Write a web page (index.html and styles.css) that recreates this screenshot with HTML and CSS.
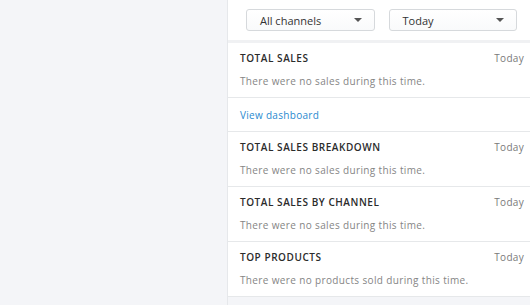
FILE: index.html
```html
<!DOCTYPE html>
<html lang="en">
<head>
    <meta charset="UTF-8">
    <meta name="viewport" content="width=device-width, initial-scale=1.0">
    <title>Dashboard</title>
    <link rel="stylesheet" href="styles.css">
</head>
<body>
    <div class="page">
        <div class="sidebar"></div>

        <!-- Painel de relatórios -->
        <div class="panel">
            <div class="filters">
                <div class="select">All channels <span class="caret"></span></div>
                <div class="select">Today <span class="caret"></span></div>
            </div>

            <div class="card">
                <div class="card-head">
                    <span class="card-title">TOTAL SALES</span>
                    <span class="card-date">Today</span>
                </div>
                <p class="card-text">There were no sales during this time.</p>
            </div>
            <div class="card card-link">
                <a href="#">View dashboard</a>
            </div>
            <div class="card">
                <div class="card-head">
                    <span class="card-title">TOTAL SALES BREAKDOWN</span>
                    <span class="card-date">Today</span>
                </div>
                <p class="card-text">There were no sales during this time.</p>
            </div>
            <div class="card">
                <div class="card-head">
                    <span class="card-title">TOTAL SALES BY CHANNEL</span>
                    <span class="card-date">Today</span>
                </div>
                <p class="card-text">There were no sales during this time.</p>
            </div>
            <div class="card">
                <div class="card-head">
                    <span class="card-title">TOP PRODUCTS</span>
                    <span class="card-date">Today</span>
                </div>
                <p class="card-text">There were no products sold during this time.</p>
            </div>
        </div>
    </div>
</body>
</html>
```

FILE: styles.css
```css
body {
    margin: 0;
    font-family: 'Open Sans', sans-serif;
    background-color: #f4f5f8;
    color: #333;
}
.page {
    display: flex;
    min-height: 305px;
}
.sidebar {
    flex: 1;
    background-color: #f4f5f8;
}
.panel {
    width: 302px;
    border-left: 1px solid #e6e8eb;
    background-color: #f4f5f8;
}
.filters {
    display: flex;
    gap: 14px;
    padding: 9px 13px 9px 18px;
    background: #ffffff;
    border-bottom: 3px solid #f0f1f3;
}
.select {
    display: flex;
    justify-content: space-between;
    align-items: center;
    width: 129px;
    height: 22px;
    box-sizing: border-box;
    padding: 0 12px 0 13px;
    border: 1px solid #d6d9dc;
    border-radius: 3px;
    background: linear-gradient(#ffffff, #f9fafb);
    font-size: 11px;
    color: #333;
}
.caret {
    width: 0;
    height: 0;
    border-left: 4px solid transparent;
    border-right: 4px solid transparent;
    border-top: 4px solid #555;
}
.card {
    background: #ffffff;
    padding: 8px 6px 9px 12px;
    border-bottom: 1px solid #e6e8ea;
}
.card-head {
    display: flex;
    justify-content: space-between;
    line-height: 14px;
}
.card-title {
    font-size: 10px;
    font-weight: 600;
    letter-spacing: 0.55px;
    color: #2b2b2b;
}
.card-date {
    font-size: 10px;
    letter-spacing: 0.3px;
    color: #7a7a7a;
}
.card-text {
    margin: 9px 0 0;
    line-height: 14px;
    font-size: 10px;
    letter-spacing: 0.36px;
    color: #858585;
}
.card-link {
    padding: 8px 12px 9px;
    line-height: 14px;
}
.card-link a {
    font-size: 10px;
    letter-spacing: 0.3px;
    color: #2a8ad0;
    text-decoration: none;
}
```
